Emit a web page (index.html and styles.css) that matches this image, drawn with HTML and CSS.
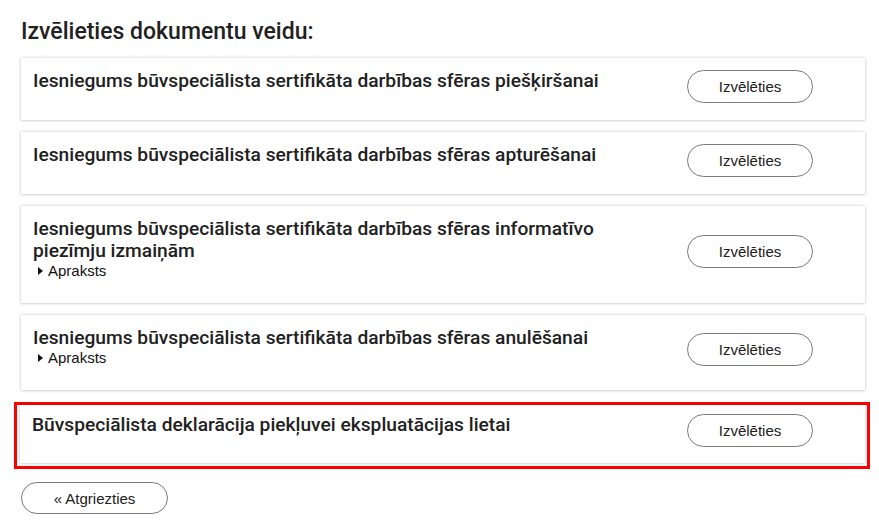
FILE: index.html
```html
<!DOCTYPE html>
<html lang="lv">
<head>
<meta charset="utf-8">
<title>Izvēlieties dokumentu veidu</title>
<link rel="stylesheet" href="styles.css">
</head>
<body>
<main class="page">
  <h1 class="page-title">Izvēlieties dokumentu veidu:</h1>

  <section class="card">
    <div class="card-body">
      <h2 class="card-title">Iesniegums būvspeciālista sertifikāta darbības sfēras piešķiršanai</h2>
    </div>
    <button class="btn btn-select" type="button">Izvēlēties</button>
  </section>

  <section class="card">
    <div class="card-body">
      <h2 class="card-title">Iesniegums būvspeciālista sertifikāta darbības sfēras apturēšanai</h2>
    </div>
    <button class="btn btn-select" type="button">Izvēlēties</button>
  </section>

  <section class="card">
    <div class="card-body">
      <h2 class="card-title">Iesniegums būvspeciālista sertifikāta darbības sfēras informatīvo piezīmju izmaiņām</h2>
      <details class="desc"><summary>Apraksts</summary></details>
    </div>
    <button class="btn btn-select" type="button">Izvēlēties</button>
  </section>

  <section class="card">
    <div class="card-body">
      <h2 class="card-title">Iesniegums būvspeciālista sertifikāta darbības sfēras anulēšanai</h2>
      <details class="desc"><summary>Apraksts</summary></details>
    </div>
    <button class="btn btn-select" type="button">Izvēlēties</button>
  </section>

  <div class="selected">
    <section class="card card-active">
      <div class="card-body">
        <h2 class="card-title">Būvspeciālista deklarācija piekļuvei ekspluatācijas lietai</h2>
      </div>
      <button class="btn btn-select" type="button">Izvēlēties</button>
    </section>
  </div>

  <button class="btn btn-back" type="button">« Atgriezties</button>
</main>
</body>
</html>
```

FILE: styles.css
```css
* { box-sizing: border-box; }

html, body {
  margin: 0;
  padding: 0;
  background: #ffffff;
}

body {
  font-family: Roboto, "Liberation Sans", Arial, sans-serif;
  color: #212121;
}

.page {
  padding: 18px 14px 0 21px;
  display: flex;
  flex-direction: column;
  align-items: stretch;
}

.page-title {
  margin: 0 0 13px 0;
  font-size: 23px;
  line-height: 27px;
  font-weight: 500;
  color: #212121;
}

.card {
  display: flex;
  align-items: center;
  background: #ffffff;
  padding: 12px 12px 24px 12px;
  margin-bottom: 12px;
  box-shadow: 0 0 3px rgba(0, 0, 0, 0.22), 0 1px 2px rgba(0, 0, 0, 0.08);
}

.card-body {
  flex: 1;
  min-width: 0;
  min-height: 26px;
}

.card-title {
  margin: 0;
  font-size: 19.2px;
  line-height: 22px;
  font-weight: 500;
  color: #212121;
}

.desc summary {
  list-style: none;
  display: flex;
  align-items: center;
  font-family: "Liberation Sans", Arial, sans-serif;
  font-size: 15px;
  line-height: 17px;
  color: #111;
  padding-left: 5px;
  cursor: pointer;
}

.desc summary::-webkit-details-marker { display: none; }

.desc summary::before {
  content: "";
  display: inline-block;
  border-left: 5px solid #111;
  border-top: 4px solid transparent;
  border-bottom: 4px solid transparent;
  margin-right: 5px;
}

.btn {
  font-family: "Liberation Sans", Arial, sans-serif;
  font-size: 15px;
  color: #222;
  background: #ffffff;
  border: 1px solid #7a7a7a;
  border-radius: 17px;
  cursor: pointer;
}

.btn-select {
  flex: none;
  width: 126px;
  height: 33px;
  margin: -4px 40px -10px 30px;
}

.selected {
  border: 3px solid #ff0000;
  margin: 0 -5px 0 -7px;
  padding: 0 2px 3px 3px;
}

.card-active {
  margin-bottom: 0;
  padding-top: 9px;
  padding-bottom: 23px;
}

.btn-back {
  align-self: flex-start;
  width: 147px;
  height: 32px;
  margin-top: 13px;
  border-radius: 16px;
}
```
